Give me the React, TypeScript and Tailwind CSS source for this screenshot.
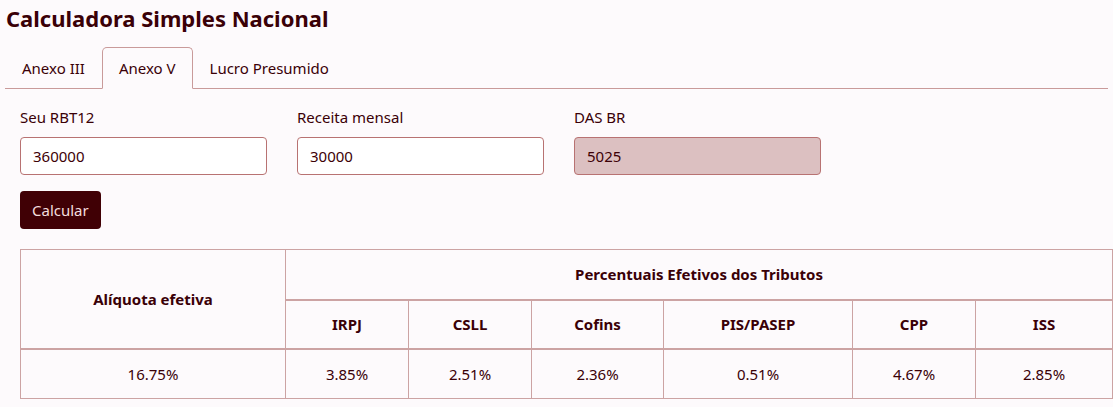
import { useState } from 'react';

const tabs = ['Anexo III', 'Anexo V', 'Lucro Presumido'];

const tributos = [
  { nome: 'IRPJ', valor: '3.85%', w: 'w-[123px]' },
  { nome: 'CSLL', valor: '2.51%', w: 'w-[123px]' },
  { nome: 'Cofins', valor: '2.36%', w: 'w-[132px]' },
  { nome: 'PIS/PASEP', valor: '0.51%', w: 'w-[189px]' },
  { nome: 'CPP', valor: '4.67%', w: 'w-[123px]' },
  { nome: 'ISS', valor: '2.85%', w: 'w-[137px]' },
];

function Campo({ label, value, readOnly }: { label: string; value: string; readOnly?: boolean }) {
  return (
    <div className="flex flex-col w-[247px]">
      <label className="text-[15px] leading-5 mb-[10px] mt-px">{label}</label>
      <input
        defaultValue={value}
        readOnly={readOnly}
        className={
          'h-[38px] rounded-[4px] border border-[#b87272] px-3 text-[15px] text-[#3d0006] outline-none ' +
          (readOnly ? 'bg-[#dcc0c1]' : 'bg-white')
        }
      />
    </div>
  );
}

export default function App() {
  const [ativa, setAtiva] = useState(1);

  return (
    <div className="min-h-screen bg-[#fdfafc] text-[#3a0007] px-[5px] pt-[2px] font-['Segoe_UI','Noto_Sans',sans-serif]">
      <h1 className="text-[22px] font-bold leading-8 pl-[1px]">Calculadora Simples Nacional</h1>

      {/* Abas */}
      <div className="mt-[13px] flex border-b border-[#c99a9a]">
        {tabs.map((t, i) => (
          <button
            key={t}
            onClick={() => setAtiva(i)}
            className={
              'h-[42px] px-4 text-[15px] -mb-px rounded-t-[5px] border ' +
              (i === ativa
                ? 'border-[#c99a9a] border-b-[#fdfafc] bg-[#fdfafc]'
                : 'border-transparent')
            }
          >
            {t}
          </button>
        ))}
      </div>

      <div className="pl-[15px] pt-[17px]">
        <div className="flex gap-[30px]">
          <Campo label="Seu RBT12" value="360000" />
          <Campo label="Receita mensal" value="30000" />
          <Campo label="DAS BR" value="5025" readOnly />
        </div>

        <button className="mt-[16px] h-[38px] px-3 rounded-[4px] bg-[#400005] text-[15px] text-[#f3dede]">
          Calcular
        </button>

        <table className="mt-[20px] w-[1093px] border-collapse text-[15px] text-center">
          <thead>
            <tr className="h-[50px]">
              <th rowSpan={2} className="w-[265px] border border-[#cca3a3] font-bold">
                Alíquota efetiva
              </th>
              <th colSpan={6} className="border border-[#cca3a3] border-b-2 font-bold">
                Percentuais Efetivos dos Tributos
              </th>
            </tr>
            <tr className="h-[49px]">
              {tributos.map((t) => (
                <th key={t.nome} className={t.w + ' border border-[#cca3a3] font-bold'}>
                  {t.nome}
                </th>
              ))}
            </tr>
          </thead>
          <tbody>
            <tr className="h-[50px] border-t-2 border-[#cca3a3]">
              <td className="border border-[#cca3a3]">16.75%</td>
              {tributos.map((t) => (
                <td key={t.nome} className="border border-[#cca3a3]">
                  {t.valor}
                </td>
              ))}
            </tr>
          </tbody>
        </table>
      </div>
    </div>
  );
}
